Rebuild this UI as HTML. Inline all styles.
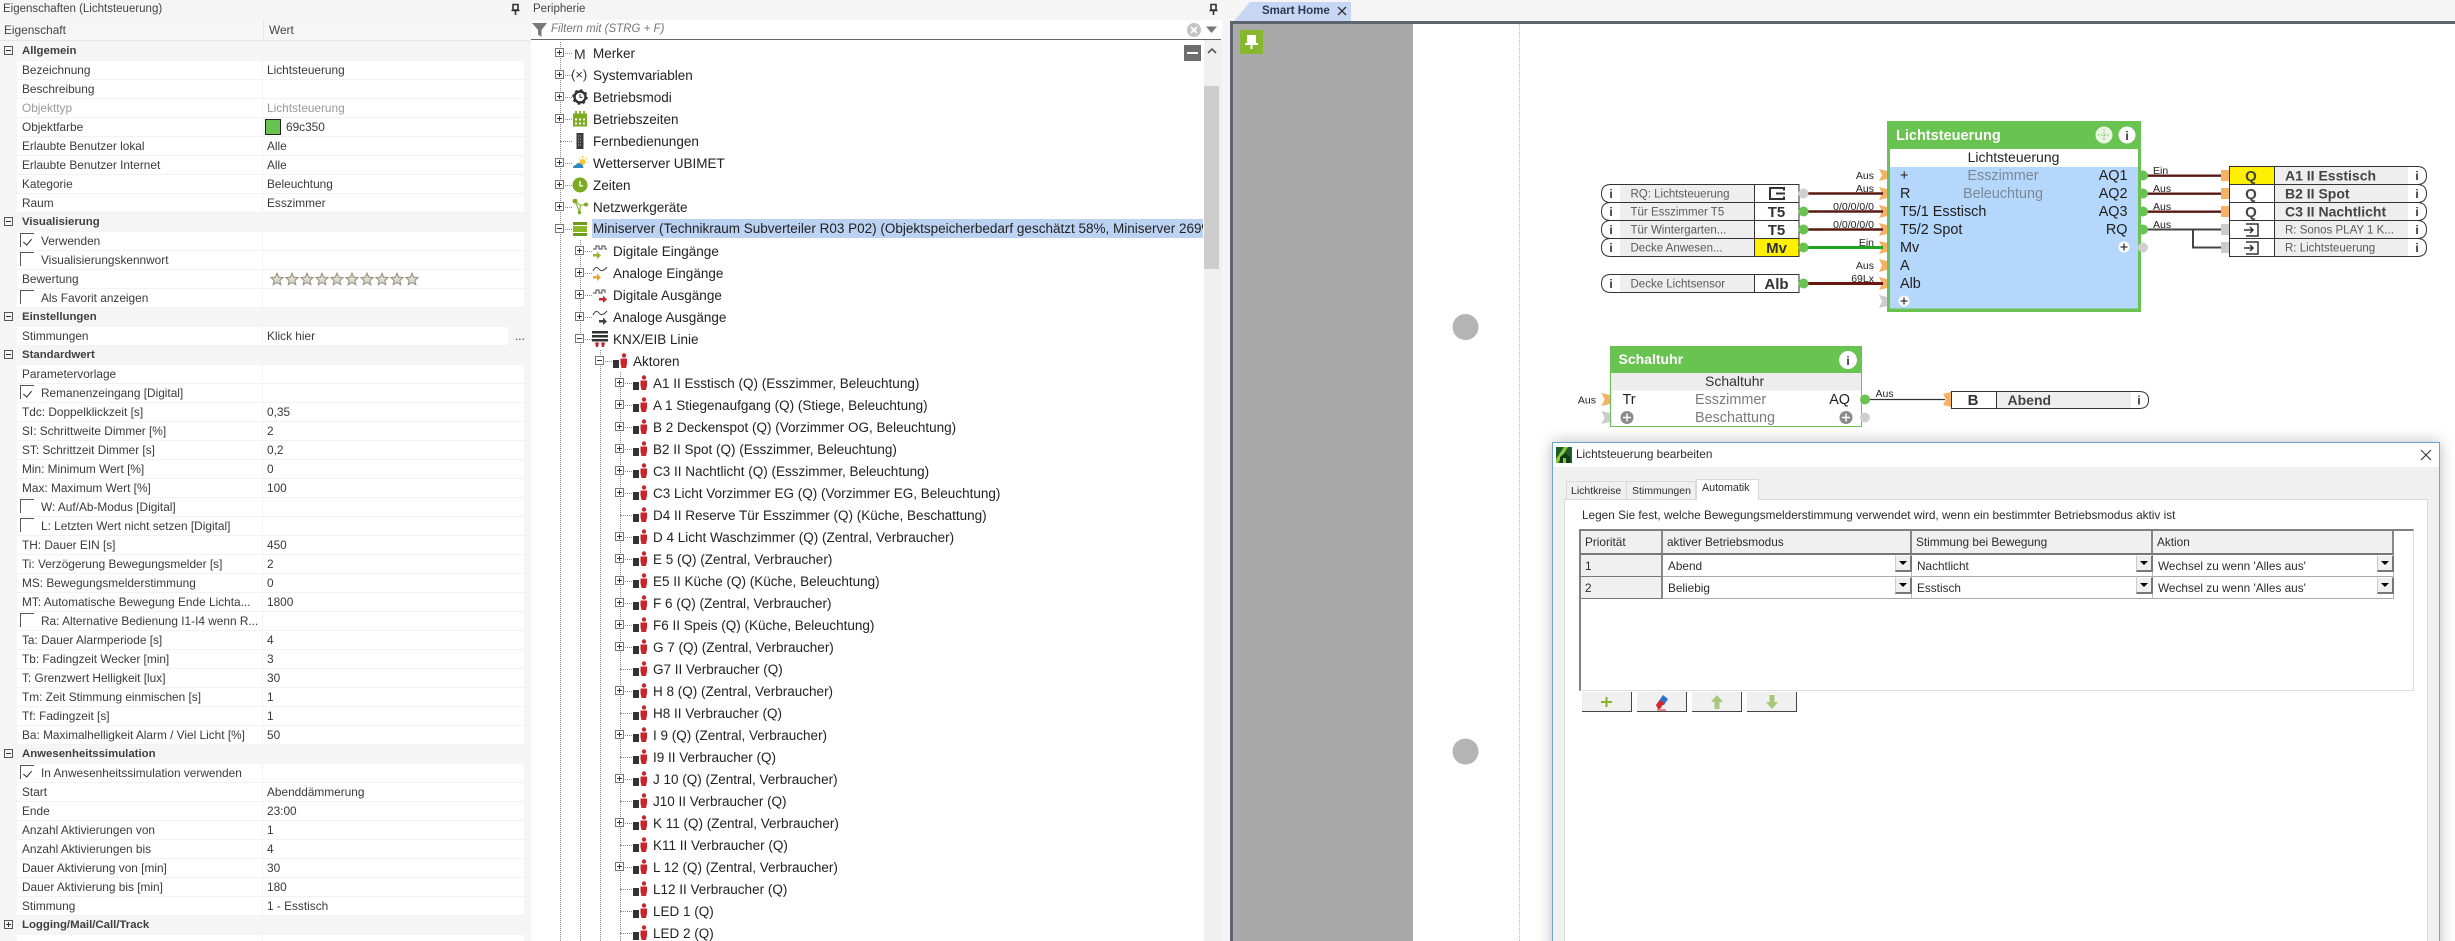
<!DOCTYPE html>
<html><head><meta charset="utf-8"><title>Smart Home</title>
<style>
*{box-sizing:border-box;margin:0;padding:0}
html,body{width:2455px;height:941px;overflow:hidden;background:#f5f5f5}
body{position:relative;font-family:"Liberation Sans",sans-serif;color:#333}
.a{position:absolute}
#L{left:0;top:42px;width:530px;height:899px;overflow:hidden;font-size:11.85px}
.g{height:19px;line-height:19px;padding-left:22px;font-weight:bold;font-size:11.4px;position:relative;color:#404040}
.g i,.t .e{position:absolute;width:9px;height:9px;border:1px solid #555;background:#fff}
.g i{left:4px;top:4px;background:#f5f5f5}
.g i::before,.t .e::before{content:"";position:absolute;left:1px;top:3px;width:5px;height:1px;background:#333}
.g i.p::after,.t .e.p::after{content:"";position:absolute;left:3px;top:1px;width:1px;height:5px;background:#333}
.d{height:19px;line-height:18px;margin-left:17px;width:507px;background:#fff;border-bottom:1px solid #f2f2f2;position:relative;color:#3a3a3a}
.d::after{content:"";position:absolute;left:245px;top:0;bottom:0;width:1px;background:#f2f2f2}
.d span{position:absolute;left:5px;white-space:nowrap}
.d em{position:absolute;left:250px;font-style:normal;white-space:nowrap}
.d.c span{left:24px}
.d.c i{position:absolute;left:3px;top:1px;width:14px;height:14px;border-left:1px solid #555;border-top:1px solid #555}
.d.k i::after{content:"";position:absolute;left:4px;top:3px;width:4px;height:7px;border-right:1px solid #222;border-bottom:1px solid #222;transform:rotate(40deg)}
#T{left:0;top:43px;width:1204px;height:898px;overflow:hidden;font-size:13.5px;color:#222}
.t{position:relative;height:22px;line-height:22px}
.t::before{content:"";position:absolute;left:560px;top:10px;width:12px;border-top:1px dotted #888}
.t .e{left:555px;top:5px;border-color:#777}
.t svg{position:absolute;left:572px;top:2px;width:16px;height:16px}
.t span{position:absolute;left:593px;white-space:nowrap}
.t1{margin-left:20px}.t2{margin-left:40px}.t3{margin-left:60px}
.v{border-left:1px dotted #888;width:0}
#D{left:1552px;top:442px;width:888px;height:520px;background:#f0f0f0;border:1px solid #6da5d8;box-shadow:0 0 14px rgba(0,0,0,.28);font-size:11.8px;color:#2c2c2c}
#D .a{white-space:nowrap}
.cell{border-bottom:1px solid #aaa;border-right:1px solid #bbb;line-height:22px;padding-left:5px;background:#fff}
.hd{background:#f0f0f0;border-bottom:2px solid #777;border-right:2px solid #888;line-height:23px;padding-left:4px}
.dd{width:17px;height:17px;background:#f0f0f0;border-top:1px solid #fff;border-left:1px solid #ccc;border-right:2px solid #777;border-bottom:2px solid #777}
.dd::after{content:"";position:absolute;left:3px;top:5px;border:4px solid transparent;border-top:4px solid #000;border-bottom:0}
.btn{width:50px;height:20px;background:#f0f0f0;border-right:1px solid #444;border-bottom:1px solid #444}
svg text{font-family:"Liberation Sans",sans-serif}
</style></head><body>

<svg width="0" height="0" style="position:absolute"><defs>
<symbol id="ac" viewBox="0 0 16 16"><rect x="1" y="7" width="6" height="8" fill="#333"/><circle cx="12" cy="2.5" r="2.2" fill="#c9252b"/><path d="M8.5 5.5H15V10.5L14 15H9.5L8.5 10.5Z" fill="#c9252b"/></symbol>
<symbol id="st" viewBox="0 0 14 14"><path d="M7 1.2 8.7 5.2 13 5.6 9.8 8.4 10.8 12.7 7 10.4 3.2 12.7 4.2 8.4 1 5.6 5.3 5.2Z" fill="#dedbd0" stroke="#9a9484" stroke-width="1.1"/></symbol>
</defs></svg>

<!-- left panel -->
<div class="a" style="left:3px;top:2px;font-size:11.5px;line-height:14px;color:#444">Eigenschaften (Lichtsteuerung)</div>
<svg class="a" style="left:510px;top:3px" width="11" height="13" viewBox="0 0 11 13"><path d="M3 1.5H8V7H3ZM1.5 7.5H9.5M5.5 8V12" fill="none" stroke="#333" stroke-width="1.6"/></svg>
<div class="a" style="left:0;top:20px;width:530px;height:21px;background:#f6f6f6;border-bottom:1px solid #e4e4e4;font-size:11.85px;line-height:21px;color:#444"><span class="a" style="left:4px">Eigenschaft</span><span class="a" style="left:269px">Wert</span><span class="a" style="left:263px;top:0;width:1px;height:20px;background:#e6e6e6"></span></div>

<div class="a" id="L">
<div class="g"><i></i>Allgemein</div>
<div class="d"><span>Bezeichnung</span><em>Lichtsteuerung</em></div>
<div class="d"><span>Beschreibung</span></div>
<div class="d" style="color:#999"><span>Objekttyp</span><em>Lichtsteuerung</em></div>
<div class="d"><span>Objektfarbe</span><i class="a" style="left:248px;top:1px;width:16px;height:16px;background:#69c350;border:1px solid #222;z-index:1"></i><em style="left:269px">69c350</em></div>
<div class="d"><span>Erlaubte Benutzer lokal</span><em>Alle</em></div>
<div class="d"><span>Erlaubte Benutzer Internet</span><em>Alle</em></div>
<div class="d"><span>Kategorie</span><em>Beleuchtung</em></div>
<div class="d"><span>Raum</span><em>Esszimmer</em></div>
<div class="g"><i></i>Visualisierung</div>
<div class="d c k"><i></i><span>Verwenden</span></div>
<div class="d c"><i></i><span>Visualisierungskennwort</span></div>
<div class="d"><span>Bewertung</span><svg class="a" style="left:253px;top:2px" width="150" height="14"><use href="#st" width="14" height="14" x="0"/><use href="#st" width="14" height="14" x="15"/><use href="#st" width="14" height="14" x="30"/><use href="#st" width="14" height="14" x="45"/><use href="#st" width="14" height="14" x="60"/><use href="#st" width="14" height="14" x="75"/><use href="#st" width="14" height="14" x="90"/><use href="#st" width="14" height="14" x="105"/><use href="#st" width="14" height="14" x="120"/><use href="#st" width="14" height="14" x="135"/></svg></div>
<div class="d c"><i></i><span>Als Favorit anzeigen</span></div>
<div class="g"><i></i>Einstellungen</div>
<div class="d"><span>Stimmungen</span><em>Klick hier</em><b class="a" style="left:491px;width:16px;top:0;height:18px;background:#f5f5f5;font-weight:normal;padding-left:7px;z-index:1">...</b></div>
<div class="g"><i></i>Standardwert</div>
<div class="d"><span>Parametervorlage</span></div>
<div class="d c k"><i></i><span>Remanenzeingang [Digital]</span></div>
<div class="d"><span>Tdc: Doppelklickzeit [s]</span><em>0,35</em></div>
<div class="d"><span>SI: Schrittweite Dimmer [%]</span><em>2</em></div>
<div class="d"><span>ST: Schrittzeit Dimmer [s]</span><em>0,2</em></div>
<div class="d"><span>Min: Minimum Wert [%]</span><em>0</em></div>
<div class="d"><span>Max: Maximum Wert [%]</span><em>100</em></div>
<div class="d c"><i></i><span>W: Auf/Ab-Modus [Digital]</span></div>
<div class="d c"><i></i><span>L: Letzten Wert nicht setzen [Digital]</span></div>
<div class="d"><span>TH: Dauer EIN [s]</span><em>450</em></div>
<div class="d"><span>Ti: Verzögerung Bewegungsmelder [s]</span><em>2</em></div>
<div class="d"><span>MS: Bewegungsmelderstimmung</span><em>0</em></div>
<div class="d"><span>MT: Automatische Bewegung Ende Lichta...</span><em>1800</em></div>
<div class="d c"><i></i><span>Ra: Alternative Bedienung I1-I4 wenn R...</span></div>
<div class="d"><span>Ta: Dauer Alarmperiode [s]</span><em>4</em></div>
<div class="d"><span>Tb: Fadingzeit Wecker [min]</span><em>3</em></div>
<div class="d"><span>T: Grenzwert Helligkeit [lux]</span><em>30</em></div>
<div class="d"><span>Tm: Zeit Stimmung einmischen [s]</span><em>1</em></div>
<div class="d"><span>Tf: Fadingzeit [s]</span><em>1</em></div>
<div class="d"><span>Ba: Maximalhelligkeit Alarm / Viel Licht [%]</span><em>50</em></div>
<div class="g"><i></i>Anwesenheitssimulation</div>
<div class="d c k"><i></i><span>In Anwesenheitssimulation verwenden</span></div>
<div class="d"><span>Start</span><em>Abenddämmerung</em></div>
<div class="d"><span>Ende</span><em>23:00</em></div>
<div class="d"><span>Anzahl Aktivierungen von</span><em>1</em></div>
<div class="d"><span>Anzahl Aktivierungen bis</span><em>4</em></div>
<div class="d"><span>Dauer Aktivierung von [min]</span><em>30</em></div>
<div class="d"><span>Dauer Aktivierung bis [min]</span><em>180</em></div>
<div class="d"><span>Stimmung</span><em>1 - Esstisch</em></div>
<div class="g"><i class="p"></i>Logging/Mail/Call/Track</div>
<div class="d"></div>
</div>

<!-- peripherie -->
<div class="a" style="left:533px;top:2px;font-size:11.5px;line-height:14px;color:#444">Peripherie</div>
<svg class="a" style="left:1208px;top:3px" width="11" height="13" viewBox="0 0 11 13"><path d="M3 1.5H8V7H3ZM1.5 7.5H9.5M5.5 8V12" fill="none" stroke="#333" stroke-width="1.6"/></svg>
<div class="a" style="left:531px;top:20px;width:691px;height:921px;background:#fff"></div>
<div class="a" style="left:531px;top:39px;width:690px;height:1px;background:#666"></div>
<svg class="a" style="left:532px;top:22px" width="16" height="16" viewBox="0 0 16 16"><path d="M0 1H15L9.5 8V15L6 12.5V8Z" fill="#7a7a7a"/></svg>
<div class="a" style="left:551px;top:22px;font-size:11.5px;line-height:15px;font-style:italic;color:#777">Filtern mit (STRG + F)</div>
<svg class="a" style="left:1186px;top:22px" width="34" height="16"><circle cx="8" cy="8" r="7" fill="#c4c4c4"/><path d="M5 5 11 11M11 5 5 11" stroke="#fff" stroke-width="1.6"/><path d="M20 4.5H31L25.5 11Z" fill="#777"/></svg>

<div class="a v" style="left:560px;top:42px;height:899px"></div>
<div class="a v" style="left:580px;top:240px;height:701px"></div>
<div class="a v" style="left:600px;top:350px;height:591px"></div>
<div class="a v" style="left:620px;top:372px;height:569px"></div>

<div class="a" id="T">
<div class="t"><i class="e p"></i><b class="a" style="left:574px;font-weight:normal;font-size:14px;color:#333">M</b><span>Merker</span></div>
<div class="t"><i class="e p"></i><b class="a" style="left:571px;font-weight:normal;font-size:13px;color:#333;top:-1px">(×)</b><span>Systemvariablen</span></div>
<div class="t"><i class="e p"></i><svg viewBox="0 0 16 16"><circle cx="8" cy="8" r="5.5" fill="none" stroke="#333" stroke-width="2.4"/><circle cx="8" cy="8" r="7" fill="none" stroke="#333" stroke-width="1.6" stroke-dasharray="2.4 3.1"/><path d="M8 5V8.4H10.5" fill="none" stroke="#333"/></svg><span>Betriebsmodi</span></div>
<div class="t"><i class="e p"></i><svg viewBox="0 0 16 16"><rect x="1" y="2.5" width="14" height="13" fill="#7cab22"/><path d="M4 0V4M8 0V4M12 0V4" stroke="#7cab22" stroke-width="1.7"/><path d="M3 7.5H5V9.5H3ZM7 7.5H9V9.5H7ZM11 7.5H13V9.5H11ZM3 11.5H5V13.5H3ZM7 11.5H9V13.5H7ZM11 11.5H13V13.5H11Z" fill="#fff"/></svg><span>Betriebszeiten</span></div>
<div class="t"><svg viewBox="0 0 16 16"><rect x="4.5" y="0" width="7" height="16" fill="#3a3a3a"/><path d="M6 3H10M6 6H10M6 9H10M6 12H10" stroke="#bbb" stroke-dasharray="1 1"/></svg><span>Fernbedienungen</span></div>
<div class="t"><i class="e p"></i><svg viewBox="0 0 16 16"><circle cx="10.5" cy="7" r="3" fill="#f3c43a"/><path d="M10.5 1V3M15 3 13.5 4.5M16 7H14.5M7 3 8 4.5" stroke="#f3c43a"/><path d="M1 13Q1 10 4 10Q5 7 8 8.5Q11 9 11.5 13Z" fill="#2d86bf"/></svg><span>Wetterserver UBIMET</span></div>
<div class="t"><i class="e p"></i><svg viewBox="0 0 16 16"><circle cx="8" cy="8" r="7.5" fill="#7cab22"/><path d="M8 4V8.8H11" fill="none" stroke="#fff" stroke-width="1.3"/></svg><span>Zeiten</span></div>
<div class="t"><i class="e p"></i><svg viewBox="0 0 16 16"><path d="M3 2 8.5 6.5 14 5M8.5 6.5 7.5 13M3 2 7.5 13" stroke="#7cab22" fill="none"/><circle cx="3" cy="2" r="2.4" fill="#7cab22"/><circle cx="14" cy="5.5" r="2" fill="#7cab22"/><circle cx="7.5" cy="13.5" r="1.7" fill="#7cab22"/></svg><span>Netzwerkgeräte</span></div>
<div class="t"><i class="e"></i><svg viewBox="0 0 16 16"><rect x="1" y="1" width="14" height="3" fill="#6f9b1a"/><rect x="1" y="5" width="14" height="6" fill="#8cb82c"/><rect x="1" y="12" width="14" height="3" fill="#6f9b1a"/></svg><span style="left:592px;width:611px;overflow:hidden;background:#bcd2f2;top:0;height:19px;line-height:20px;padding-left:1px">Miniserver (Technikraum Subverteiler R03 P02) (Objektspeicherbedarf geschätzt 58%, Miniserver 269%)</span></div>
<div class="t t1"><i class="e p"></i><svg viewBox="0 0 16 16"><path d="M1 6H4V3H7V6H10V3H13V6H15" fill="none" stroke="#444"/><path d="M1 11H5V8.5L9 12.5 5 16V13.5H1Z" fill="#93b82e"/></svg><span>Digitale Eingänge</span></div>
<div class="t t1"><i class="e p"></i><svg viewBox="0 0 16 16"><path d="M1 6Q4 0 7 4T15 2" fill="none" stroke="#444"/><path d="M1 11H5V8.5L9 12.5 5 16V13.5H1Z" fill="#e0a93a"/></svg><span>Analoge Eingänge</span></div>
<div class="t t1"><i class="e p"></i><svg viewBox="0 0 16 16"><path d="M1 6H4V3H7V6H10V3H13V6" fill="none" stroke="#444"/><path d="M7 11H11V8.5L15 12.5 11 16V13.5H7Z" fill="#c9252b"/></svg><span>Digitale Ausgänge</span></div>
<div class="t t1"><i class="e p"></i><svg viewBox="0 0 16 16"><path d="M1 6Q4 0 7 4T15 2" fill="none" stroke="#444"/><path d="M7 11H11V8.5L15 12.5 11 16V13.5H7Z" fill="#444"/></svg><span>Analoge Ausgänge</span></div>
<div class="t t1"><i class="e"></i><svg viewBox="0 0 16 16"><rect x="0" y="0" width="16" height="2.5" fill="#333"/><rect x="0" y="4" width="16" height="2.5" fill="#333"/><rect x="0" y="8" width="16" height="2.5" fill="#333"/><path d="M3 11.5H7L6 16H4ZM9 11.5H13L12 16H10Z" fill="#b8262b"/></svg><span>KNX/EIB Linie</span></div>
<div class="t t2"><i class="e"></i><svg><use href="#ac" width="16" height="16"/></svg><span>Aktoren</span></div>
<div class="t t3"><i class="e p"></i><svg><use href="#ac" width="16" height="16"/></svg><span>A1 II Esstisch (Q) (Esszimmer, Beleuchtung)</span></div>
<div class="t t3"><i class="e p"></i><svg><use href="#ac" width="16" height="16"/></svg><span>A 1 Stiegenaufgang (Q) (Stiege, Beleuchtung)</span></div>
<div class="t t3"><i class="e p"></i><svg><use href="#ac" width="16" height="16"/></svg><span>B 2 Deckenspot (Q) (Vorzimmer OG, Beleuchtung)</span></div>
<div class="t t3"><i class="e p"></i><svg><use href="#ac" width="16" height="16"/></svg><span>B2 II Spot (Q) (Esszimmer, Beleuchtung)</span></div>
<div class="t t3"><i class="e p"></i><svg><use href="#ac" width="16" height="16"/></svg><span>C3 II Nachtlicht (Q) (Esszimmer, Beleuchtung)</span></div>
<div class="t t3"><i class="e p"></i><svg><use href="#ac" width="16" height="16"/></svg><span>C3 Licht Vorzimmer EG (Q) (Vorzimmer EG, Beleuchtung)</span></div>
<div class="t t3"><svg><use href="#ac" width="16" height="16"/></svg><span>D4 II Reserve Tür Esszimmer (Q) (Küche, Beschattung)</span></div>
<div class="t t3"><i class="e p"></i><svg><use href="#ac" width="16" height="16"/></svg><span>D 4 Licht Waschzimmer (Q) (Zentral, Verbraucher)</span></div>
<div class="t t3"><i class="e p"></i><svg><use href="#ac" width="16" height="16"/></svg><span>E 5 (Q) (Zentral, Verbraucher)</span></div>
<div class="t t3"><i class="e p"></i><svg><use href="#ac" width="16" height="16"/></svg><span>E5 II Küche (Q) (Küche, Beleuchtung)</span></div>
<div class="t t3"><i class="e p"></i><svg><use href="#ac" width="16" height="16"/></svg><span>F 6 (Q) (Zentral, Verbraucher)</span></div>
<div class="t t3"><i class="e p"></i><svg><use href="#ac" width="16" height="16"/></svg><span>F6 II Speis (Q) (Küche, Beleuchtung)</span></div>
<div class="t t3"><i class="e p"></i><svg><use href="#ac" width="16" height="16"/></svg><span>G 7 (Q) (Zentral, Verbraucher)</span></div>
<div class="t t3"><svg><use href="#ac" width="16" height="16"/></svg><span>G7 II Verbraucher (Q)</span></div>
<div class="t t3"><i class="e p"></i><svg><use href="#ac" width="16" height="16"/></svg><span>H 8 (Q) (Zentral, Verbraucher)</span></div>
<div class="t t3"><svg><use href="#ac" width="16" height="16"/></svg><span>H8 II Verbraucher (Q)</span></div>
<div class="t t3"><i class="e p"></i><svg><use href="#ac" width="16" height="16"/></svg><span>I 9 (Q) (Zentral, Verbraucher)</span></div>
<div class="t t3"><svg><use href="#ac" width="16" height="16"/></svg><span>I9 II Verbraucher (Q)</span></div>
<div class="t t3"><i class="e p"></i><svg><use href="#ac" width="16" height="16"/></svg><span>J 10 (Q) (Zentral, Verbraucher)</span></div>
<div class="t t3"><svg><use href="#ac" width="16" height="16"/></svg><span>J10 II Verbraucher (Q)</span></div>
<div class="t t3"><i class="e p"></i><svg><use href="#ac" width="16" height="16"/></svg><span>K 11 (Q) (Zentral, Verbraucher)</span></div>
<div class="t t3"><svg><use href="#ac" width="16" height="16"/></svg><span>K11 II Verbraucher (Q)</span></div>
<div class="t t3"><i class="e p"></i><svg><use href="#ac" width="16" height="16"/></svg><span>L 12 (Q) (Zentral, Verbraucher)</span></div>
<div class="t t3"><svg><use href="#ac" width="16" height="16"/></svg><span>L12 II Verbraucher (Q)</span></div>
<div class="t t3"><svg><use href="#ac" width="16" height="16"/></svg><span>LED 1 (Q)</span></div>
<div class="t t3"><svg><use href="#ac" width="16" height="16"/></svg><span>LED 2 (Q)</span></div>
</div>
<div class="a" style="left:1184px;top:45px;width:17px;height:16px;background:#6e6e6e"><div class="a" style="left:3px;top:7px;width:11px;height:2px;background:#fff"></div></div>
<div class="a" style="left:1204px;top:40px;width:18px;height:901px;background:#f0f0f0"></div>
<div class="a" style="left:1204px;top:86px;width:15px;height:183px;background:#cdcdcd"></div>
<svg class="a" style="left:1206px;top:46px" width="12" height="10"><path d="M2 7 6 3 10 7" fill="none" stroke="#555" stroke-width="1.6"/></svg>

<!-- main canvas -->
<div class="a" style="left:1230px;top:21px;width:1225px;height:920px;background:#fff;border-left:3px solid #5c6470;border-top:3px solid #5c6470"></div>
<div class="a" style="left:1233px;top:24px;width:180px;height:917px;background:#a9a9a9"></div>
<div class="a" style="left:1519px;top:24px;height:917px;border-left:1px dotted #bbb"></div>

<svg class="a" style="left:0;top:0" width="2455" height="941" viewBox="0 0 2455 941" font-family="Liberation Sans">
<!-- tab -->
<polygon points="1235,20 1250,2 1351,2 1351,21 1235,21" fill="#c7d7f3"/>
<text x="1262" y="14" font-size="11.5" font-weight="bold" fill="#2b3a50">Smart Home</text>
<path d="M1338 7 1346 15M1346 7 1338 15" stroke="#333" stroke-width="1.3"/>
<!-- pin -->
<rect x="1240" y="30" width="23" height="24" fill="#86b72c"/>
<path d="M1248 36H1255V43H1248ZM1245 44H1258M1251.5 44V49" fill="#fff" stroke="#fff" stroke-width="2"/>
<circle cx="1465.5" cy="327" r="13" fill="#b4b4b4"/>
<circle cx="1465.5" cy="751.5" r="13" fill="#b4b4b4"/>

<!-- Lichtsteuerung block -->
<rect x="1887" y="121" width="254" height="191" fill="#69c350"/>
<rect x="1890" y="149" width="248" height="18" fill="#fff"/>
<rect x="1890" y="167" width="248" height="141.500" fill="#b5d7fb"/>
<text x="1896" y="140" font-size="14.5" font-weight="bold" fill="#fff">Lichtsteuerung</text>
<circle cx="2104" cy="135" r="8.500" fill="#e8f5e2"/><path d="M2104 129V141M2098 135H2110" stroke="#69c350" stroke-dasharray="1.5 1.5"/>
<circle cx="2127" cy="135" r="8.500" fill="#fff"/><text x="2127" y="140" font-size="12" font-weight="bold" text-anchor="middle" fill="#333">i</text>
<text x="2013.500" y="162" font-size="14" text-anchor="middle" fill="#222">Lichtsteuerung</text>
<g font-size="14.4" fill="#1e1e1e">
<text x="1900" y="180">+</text><text x="1900" y="198">R</text><text x="1900" y="216">T5/1 Esstisch</text><text x="1900" y="234">T5/2 Spot</text><text x="1900" y="252">Mv</text><text x="1900" y="270">A</text><text x="1900" y="288">Alb</text>
<text x="2127.500" y="180" text-anchor="end">AQ1</text><text x="2127.500" y="198" text-anchor="end">AQ2</text><text x="2127.500" y="216" text-anchor="end">AQ3</text><text x="2127.500" y="234" text-anchor="end">RQ</text>
</g>
<g font-size="14.4" fill="#7b8898" text-anchor="middle"><text x="2003" y="180">Esszimmer</text><text x="2003" y="198">Beleuchtung</text></g>
<circle cx="2124" cy="247" r="5.500" fill="#fff"/><path d="M2120.500 247H2127.500M2124 243.500V250.500" stroke="#333" stroke-width="1.3"/>
<circle cx="1904" cy="301" r="5.500" fill="#fff"/><path d="M1900.500 301H1907.500M1904 297.500V304.500" stroke="#333" stroke-width="1.3"/>

<!-- input chevrons -->
<g fill="#f4b266">
<polygon points="1879,169 1887,171 1887,179 1879,181 1882,175"/><polygon points="1879,187 1887,189 1887,198 1879,200 1882,193.500"/><polygon points="1879,205 1887,207 1887,216 1879,218 1882,211.500"/><polygon points="1879,223 1887,225 1887,234 1879,236 1882,229.500"/><polygon points="1879,241 1887,243 1887,252 1879,254 1882,247.500"/><polygon points="1879,259 1887,261 1887,270 1879,272 1882,265.500"/><polygon points="1879,277 1887,279 1887,288 1879,290 1882,283.500"/>
</g>
<polygon points="1879,295 1887,297 1887,306 1879,308 1882,301.500" fill="#ccc"/>
<!-- input wires -->
<g fill="none" stroke-width="2.400">
<path d="M1808 193.500H1883M1808 211.500H1883M1808 229.500H1883" stroke="#5a1a14"/>
<path d="M1808 247.500H1883" stroke="#21a321" stroke-width="3"/>
<path d="M1808 283.500H1883" stroke="#6a1510" stroke-width="3"/>
</g>
<g font-size="10.500" fill="#222" text-anchor="end">
<text x="1874" y="179">Aus</text><text x="1874" y="192">Aus</text><text x="1874" y="210">0/0/0/0/0</text><text x="1874" y="228">0/0/0/0/0</text><text x="1874" y="246">Ein</text><text x="1874" y="269">Aus</text><text x="1874" y="282">69Lx</text>
</g>

<!-- left source boxes -->
<g stroke="#333" stroke-width="1">
<path d="M1610 184.500Q1601.500 185 1601.500 193.500Q1601.500 202 1610 202.500H1799V184.500Z" fill="#fff"/>
<path d="M1610 202.500Q1601.500 203 1601.500 211.500Q1601.500 220 1610 220.500H1799V202.500Z" fill="#fff"/>
<path d="M1610 220.500Q1601.500 221 1601.500 229.500Q1601.500 238 1610 238.500H1799V220.500Z" fill="#fff"/>
<path d="M1610 238.500Q1601.500 239 1601.500 247.500Q1601.500 256 1610 256.500H1799V238.500Z" fill="#fff"/>
<path d="M1610 274.500Q1601.500 275 1601.500 283.500Q1601.500 292 1610 292.500H1799V274.500Z" fill="#fff"/>
</g>
<g fill="#eee"><rect x="1620" y="185" width="134" height="17"/><rect x="1620" y="203" width="134" height="17"/><rect x="1620" y="221" width="134" height="17"/><rect x="1620" y="239" width="134" height="17"/><rect x="1620" y="275" width="134" height="17"/></g>
<rect x="1755" y="239" width="43.500" height="17" fill="#ffef00"/>
<path d="M1754.500 184.500V256.500M1754.500 274.500V292.500" stroke="#333"/>
<g font-size="12" font-weight="bold" fill="#333" text-anchor="middle"><text x="1611" y="198">i</text><text x="1611" y="216">i</text><text x="1611" y="234">i</text><text x="1611" y="252">i</text><text x="1611" y="288">i</text></g>
<g font-size="11.500" fill="#5a5a5a"><text x="1630.500" y="197.500">RQ: Lichtsteuerung</text><text x="1630.500" y="215.500">Tür Esszimmer T5</text><text x="1630.500" y="233.500">Tür Wintergarten...</text><text x="1630.500" y="251.500">Decke Anwesen...</text><text x="1630.500" y="287.500">Decke Lichtsensor</text></g>
<g font-size="15" font-weight="bold" fill="#333" text-anchor="middle"><text x="1776.500" y="217">T5</text><text x="1776.500" y="235">T5</text><text x="1776.500" y="253">Mv</text><text x="1776.500" y="289">Alb</text></g>
<path d="M1784 190.500V188H1770V199H1784V196.500M1776 193.500H1785" fill="none" stroke="#333" stroke-width="2"/>
<circle cx="1803.500" cy="193.500" r="5" fill="#cfcfcf"/>
<circle cx="1803.500" cy="211.500" r="5" fill="#69c350"/><circle cx="1803.500" cy="229.500" r="5" fill="#69c350"/><circle cx="1803.500" cy="247.500" r="5" fill="#69c350"/><circle cx="1803.500" cy="283.500" r="5" fill="#69c350"/>

<!-- outputs -->
<g fill="none">
<path d="M2147 175.700H2222M2147 193.700H2222M2147 211.700H2222" stroke="#5a1a14" stroke-width="2.400"/>
<path d="M2147 229.500H2222M2193 229.500V247.500H2222" stroke="#444" stroke-width="2"/>
</g>
<circle cx="2143" cy="175.500" r="5" fill="#69c350"/><circle cx="2143" cy="193.500" r="5" fill="#69c350"/><circle cx="2143" cy="211.500" r="5" fill="#69c350"/><circle cx="2143" cy="229.500" r="5" fill="#69c350"/><circle cx="2143" cy="247.500" r="5" fill="#cfcfcf"/>
<g font-size="10.500" fill="#222"><text x="2153" y="174">Ein</text><text x="2153" y="192">Aus</text><text x="2153" y="210">Aus</text><text x="2153" y="228">Aus</text></g>
<g fill="#f4b266"><rect x="2221" y="170" width="8" height="11"/><rect x="2221" y="188" width="8" height="11"/><rect x="2221" y="206" width="8" height="11"/></g>
<g fill="#ccc"><rect x="2221" y="224" width="8" height="11"/><rect x="2221" y="242" width="8" height="11"/></g>
<g stroke="#333" stroke-width="1">
<path d="M2229.500 166.500H2418Q2426.500 167 2426.500 175.500Q2426.500 184 2418 184.500H2229.500Z" fill="#fff"/>
<path d="M2229.500 184.500H2418Q2426.500 185 2426.500 193.500Q2426.500 202 2418 202.500H2229.500Z" fill="#fff"/>
<path d="M2229.500 202.500H2418Q2426.500 203 2426.500 211.500Q2426.500 220 2418 220.500H2229.500Z" fill="#fff"/>
<path d="M2229.500 220.500H2418Q2426.500 221 2426.500 229.500Q2426.500 238 2418 238.500H2229.500Z" fill="#fff"/>
<path d="M2229.500 238.500H2418Q2426.500 239 2426.500 247.500Q2426.500 256 2418 256.500H2229.500Z" fill="#fff"/>
</g>
<rect x="2230" y="167" width="44" height="17" fill="#ffef00"/>
<g fill="#eee"><rect x="2275" y="167" width="133" height="17"/><rect x="2275" y="185" width="133" height="17"/><rect x="2275" y="203" width="133" height="17"/><rect x="2275" y="221" width="133" height="17"/><rect x="2275" y="239" width="133" height="17"/></g>
<path d="M2274.500 166.500V256.500" stroke="#333"/>
<g font-size="15" font-weight="bold" fill="#444" text-anchor="middle"><text x="2251" y="181">Q</text><text x="2251" y="199">Q</text><text x="2251" y="217">Q</text></g>
<g font-size="14" font-weight="bold" fill="#444"><text x="2285" y="180.500">A1 II Esstisch</text><text x="2285" y="198.500">B2 II Spot</text><text x="2285" y="216.500">C3 II Nachtlicht</text></g>
<g font-size="11.500" fill="#5a5a5a"><text x="2285" y="233.500">R: Sonos PLAY 1 K...</text><text x="2285" y="251.500">R: Lichtsteuerung</text></g>
<g font-size="12" font-weight="bold" fill="#333" text-anchor="middle"><text x="2417" y="180">i</text><text x="2417" y="198">i</text><text x="2417" y="216">i</text><text x="2417" y="234">i</text><text x="2417" y="252">i</text></g>
<path d="M2246 224H2258V236H2246M2244 230H2253M2250 227 2253 230 2250 233" fill="none" stroke="#333" stroke-width="1.500"/>
<path d="M2246 242H2258V254H2246M2244 248H2253M2250 245 2253 248 2250 251" fill="none" stroke="#333" stroke-width="1.500"/>

<!-- Schaltuhr -->
<rect x="1610.500" y="346.500" width="251" height="80" fill="#fff" stroke="#69c350"/>
<rect x="1610" y="346" width="252" height="27" fill="#69c350"/>
<rect x="1611" y="373" width="250" height="17.500" fill="#ededed"/>
<text x="1618.500" y="364" font-size="14" font-weight="bold" fill="#fff">Schaltuhr</text>
<circle cx="1848" cy="360" r="9" fill="#fff"/><text x="1848" y="365" font-size="12" font-weight="bold" text-anchor="middle" fill="#333">i</text>
<text x="1705" y="386" font-size="14" fill="#333">Schaltuhr</text>
<text x="1622.500" y="404" font-size="14.4" fill="#1e1e1e">Tr</text>
<text x="1850" y="404" font-size="14.4" text-anchor="end" fill="#1e1e1e">AQ</text>
<g font-size="14.4" fill="#7b7b7b"><text x="1695" y="404">Esszimmer</text><text x="1695" y="422">Beschattung</text></g>
<circle cx="1627" cy="417.500" r="6.500" fill="#8a8a8a"/><path d="M1623 417.500H1631M1627 413.500V421.500" stroke="#fff" stroke-width="1.400"/>
<circle cx="1846" cy="417.500" r="6.500" fill="#8a8a8a"/><path d="M1842 417.500H1850M1846 413.500V421.500" stroke="#fff" stroke-width="1.400"/>
<polygon points="1601.500,393 1610,395 1610,404 1601.500,406 1604.500,399.500" fill="#f4b266"/>
<polygon points="1601.500,411 1610,413 1610,422 1601.500,424 1604.500,417.500" fill="#ccc"/>
<text x="1596" y="403.500" font-size="10.500" text-anchor="end" fill="#222">Aus</text>
<path d="M1869 399.500H1945" stroke="#333" stroke-width="1.200"/>
<circle cx="1865" cy="399.500" r="5" fill="#69c350"/><circle cx="1865" cy="417.500" r="5" fill="#cfcfcf"/>
<text x="1875.500" y="397" font-size="10.500" fill="#222">Aus</text>
<polygon points="1943,394 1951,392 1951,407 1943,405 1946,399.500" fill="#f4b266"/>
<path d="M1951.500 391.500H2140Q2148.500 392 2148.500 400Q2148.500 408 2140 408.500H1951.500Z" fill="#fff" stroke="#333"/>
<rect x="1997" y="392" width="134" height="16" fill="#eee"/>
<path d="M1996.500 391.500V408.500" stroke="#333"/>
<text x="1973" y="405" font-size="15" font-weight="bold" text-anchor="middle" fill="#333">B</text>
<text x="2007.500" y="405" font-size="14" font-weight="bold" fill="#444">Abend</text>
<text x="2139" y="404.500" font-size="12" font-weight="bold" text-anchor="middle" fill="#333">i</text>
</svg>

<!-- dialog -->
<div class="a" id="D">
<div class="a" style="left:0;top:0;width:886px;height:24px;background:#fff"></div>
<svg class="a" style="left:3px;top:4px" width="16" height="16" viewBox="0 0 16 16"><rect width="16" height="16" fill="#1f5c2a"/><path d="M0 12 8 0H12L2 16H0Z" fill="#8cc63f"/><path d="M4 16V10L9 6 14 10V16Z" fill="#0f3d18"/><rect x="7" y="11" width="3" height="5" fill="#8cc63f"/></svg>
<div class="a" style="left:23px;top:4px;line-height:15px">Lichtsteuerung bearbeiten</div>
<svg class="a" style="left:867px;top:6px" width="12" height="12"><path d="M1 1 11 11M11 1 1 11" stroke="#333" stroke-width="1.100"/></svg>

<div class="a" style="left:13px;top:38px;width:61px;height:19px;background:#f0f0f0;border:1px solid #d9d9d9;border-bottom:0;line-height:18px;padding-left:4px;font-size:10.5px">Lichtkreise</div>
<div class="a" style="left:74px;top:38px;width:69px;height:19px;background:#f0f0f0;border:1px solid #d9d9d9;border-bottom:0;border-left:0;line-height:18px;padding-left:5px;font-size:10.5px">Stimmungen</div>
<div class="a" style="left:11px;top:56px;width:864px;height:470px;background:#fff;border:1px solid #d9d9d9"></div>
<div class="a" style="left:143px;top:36px;width:63px;height:21px;background:#fff;border:1px solid #d9d9d9;border-bottom:0;line-height:17px;padding-left:5px;font-size:10.7px">Automatik</div>
<div class="a" style="left:29px;top:65px;line-height:15px">Legen Sie fest, welche Bewegungsmelderstimmung verwendet wird, wenn ein bestimmter Betriebsmodus aktiv ist</div>

<div class="a" style="left:26px;top:86px;width:835px;height:162px;background:#fff;border-top:2px solid #808080;border-left:2px solid #808080;border-right:1px solid #ddd;border-bottom:1px solid #ddd"></div>
<div class="a hd" style="left:28px;top:88px;width:82px;height:24px">Priorität</div>
<div class="a hd" style="left:110px;top:88px;width:249px;height:24px">aktiver Betriebsmodus</div>
<div class="a hd" style="left:359px;top:88px;width:241px;height:24px">Stimmung bei Bewegung</div>
<div class="a hd" style="left:600px;top:88px;width:241px;height:24px">Aktion</div>

<div class="a cell" style="left:28px;top:112px;width:82px;height:22px;background:#f0f0f0;border-bottom:1px solid #777;border-right:2px solid #888;padding-left:4px">1</div>
<div class="a cell" style="left:28px;top:134px;width:82px;height:22px;background:#f0f0f0;border-bottom:1px solid #777;border-right:2px solid #888;padding-left:4px">2</div>
<div class="a cell" style="left:110px;top:112px;width:249px;height:22px">Abend</div>
<div class="a cell" style="left:110px;top:134px;width:249px;height:22px">Beliebig</div>
<div class="a cell" style="left:359px;top:112px;width:241px;height:22px">Nachtlicht</div>
<div class="a cell" style="left:359px;top:134px;width:241px;height:22px">Esstisch</div>
<div class="a cell" style="left:600px;top:112px;width:241px;height:22px">Wechsel zu wenn 'Alles aus'</div>
<div class="a cell" style="left:600px;top:134px;width:241px;height:22px">Wechsel zu wenn 'Alles aus'</div>
<div class="a dd" style="left:342px;top:112px"></div><div class="a dd" style="left:342px;top:134px"></div>
<div class="a dd" style="left:583px;top:112px"></div><div class="a dd" style="left:583px;top:134px"></div>
<div class="a dd" style="left:824px;top:112px"></div><div class="a dd" style="left:824px;top:134px"></div>

<div class="a btn" style="left:29px;top:249px"><svg width="50" height="20"><path d="M19 10H30M24.500 5V15" stroke="#8ab32c" stroke-width="2"/></svg></div>
<div class="a btn" style="left:84px;top:249px"><svg width="50" height="20"><path d="M19 13 26 3 31 7 27 13Z" fill="#2f6fd0"/><path d="M19 13 23 8 27 11 23 17H21Z" fill="#d8262f"/><path d="M20 18H29" stroke="#d8262f"/></svg></div>
<div class="a btn" style="left:139px;top:249px"><svg width="50" height="20"><path d="M25 3 31 10H27.500V17H22.500V10H19Z" fill="#a9c67a"/></svg></div>
<div class="a btn" style="left:194px;top:249px"><svg width="50" height="20"><path d="M25 17 31 10H27.500V3H22.500V10H19Z" fill="#a9c67a"/></svg></div>
</div>
</body></html>
